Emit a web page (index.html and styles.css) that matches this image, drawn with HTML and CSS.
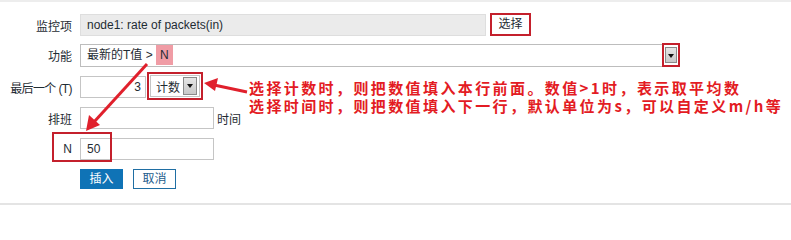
FILE: index.html
```html
<!DOCTYPE html>
<html lang="zh">
<head>
<meta charset="utf-8">
<link rel="stylesheet" href="styles.css">
</head>
<body>
<div class="page">
  <div class="form">
    <div class="row r1">
      <div class="lbl">监控项</div>
      <div class="field">
        <div class="inp grey w-item">node1: rate of packets(in)</div>
        <span class="redbox rb-btn"><span class="btn">选择</span></span>
      </div>
    </div>
    <div class="row r2">
      <div class="lbl">功能</div>
      <div class="field">
        <div class="select w-func">最新的T值 &gt; <span class="hl">N</span></div>
        <span class="redbox rb-arrow"><span class="arrowbtn"></span></span>
      </div>
    </div>
    <div class="row r3">
      <div class="lbl lbl-tight">最后一个 (T)</div>
      <div class="field">
        <div class="inp w-num right">3</div>
        <span class="redbox rb-sel"><span class="minisel"><span class="minisel-text">计数</span><span class="arrowbtn"></span></span></span>
      </div>
    </div>
    <div class="row r4">
      <div class="lbl">排班</div>
      <div class="field">
        <div class="inp w-mid"></div>
        <span class="suffix">时间</span>
      </div>
    </div>
    <div class="row r5">
      <div class="lbl">N</div>
      <div class="field">
        <div class="inp w-mid">50</div>
      </div>
    </div>
    <div class="row r6">
      <div class="lbl"></div>
      <div class="field buttons">
        <span class="btn-primary">插入</span>
        <span class="btn-secondary">取消</span>
      </div>
    </div>
  </div>

  <div class="nbox"></div>

  <svg class="arrows" width="791" height="205" viewBox="0 0 791 205">
    <line x1="247" y1="92" x2="214" y2="85" stroke="#e0202c" stroke-width="3"/>
    <polygon points="204,83 218,78 215,91" fill="#e0202c"/>
    <line x1="147" y1="64" x2="94" y2="122" stroke="#e0202c" stroke-width="3"/>
    <polygon points="86,131 89,115 100,125" fill="#e0202c"/>
  </svg>

  <div class="note">
    <div class="note-line">选择计数时，则把数值填入本行前面。数值&gt;1时，表示取平均数</div>
    <div class="note-line">选择时间时，则把数值填入下一行，默认单位为s，可以自定义m/h等</div>
  </div>
</div>
</body>
</html>
```
FILE: styles.css
```css
* { box-sizing: border-box; }
html, body { margin: 0; padding: 0; background: #fff; }
body {
  font-family: "Liberation Sans", "Noto Sans CJK SC", sans-serif;
  font-size: 12px;
  color: #1f2c33;
}
.page {
  position: relative;
  width: 791px;
  height: 205px;
  border-top: 2px solid #ededed;
  border-bottom: 2px solid #e4e4e4;
  overflow: hidden;
}
.form {
  display: flex;
  flex-direction: column;
}
.row {
  display: flex;
  align-items: center;
  height: 22px;
}
.r1 { margin-top: 12px; }
.r2 { margin-top: 8px; }
.r3 { margin-top: 10px; }
.r4 { margin-top: 9px; }
.r5 { margin-top: 9px; }
.r6 { margin-top: 9px; height: 20px; }

.lbl {
  width: 72px;
  text-align: right;
  white-space: nowrap;
  font-size: 12px;
  color: #1f2c33;
}
.lbl-tight { letter-spacing: -0.6px; }
.field {
  margin-left: 8px;
  display: flex;
  align-items: center;
  height: 100%;
}
.inp {
  height: 22px;
  border: 1px solid #c5c5c5;
  background: #fff;
  padding: 0 6px;
  line-height: 20px;
  font-size: 12px;
  color: #1f2c33;
  white-space: nowrap;
}
.inp.grey { background: #ebebeb; border-color: #dedede; }
.inp.right { text-align: right; padding-right: 4px; }
.w-item { width: 406px; }
.w-num { width: 66px; }
.w-mid { width: 134px; }

.redbox {
  display: inline-flex;
  align-items: center;
  justify-content: center;
  border: 2px solid #c4202c;
  background: #fff;
}
.rb-btn { margin-left: 4px; width: 41px; height: 23px; margin-top: -1px; }
.btn {
  display: inline-block;
  font-size: 12px;
  color: #1f2c33;
  line-height: 17px;
  padding: 0 5px;
}
.select {
  height: 23px;
  border: 1px solid #bdbdbd;
  border-right: none;
  background: #fff;
  padding: 0 6px;
  line-height: 21px;
  font-size: 12px;
  white-space: nowrap;
}
.w-func { width: 582px; }
.hl {
  display: inline-block;
  background: #f09ca5;
  padding: 0 4px;
  height: 20px;
  line-height: 20px;
  vertical-align: top;
}
.rb-arrow { width: 18px; height: 24px; }
.arrowbtn {
  position: relative;
  display: inline-block;
  width: 12px;
  height: 16px;
  background: linear-gradient(#e6e6e6, #c8c8c8);
  border: 1px solid #8a8a8a;
}
.arrowbtn::after {
  content: "";
  position: absolute;
  left: 2px;
  top: 6px;
  border-left: 3px solid transparent;
  border-right: 3px solid transparent;
  border-top: 4px solid #111;
}
.rb-sel { margin-left: 1px; width: 56px; height: 28px; margin-top: -2px; }
.minisel {
  display: inline-flex;
  align-items: center;
  height: 22px;
  width: 50px;
  border: 1px solid #c5c5c5;
  background: #fff;
  padding-left: 5px;
}
.minisel-text { flex: 1; font-size: 12px; color: #1f2c33; }
.minisel .arrowbtn { width: 14px; height: 18px; margin-right: 2px; }
.minisel .arrowbtn::after { left: 3px; top: 6px; }
.suffix { margin-left: 3px; font-size: 12px; color: #1f2c33; }

.buttons { gap: 10px; }
.btn-primary {
  display: inline-block;
  width: 43px;
  height: 20px;
  line-height: 20px;
  text-align: center;
  background: #0f73b6;
  color: #fff;
  font-size: 12px;
}
.btn-secondary {
  display: inline-block;
  width: 43px;
  height: 20px;
  line-height: 18px;
  text-align: center;
  border: 1px solid #1f6ea3;
  background: #fff;
  color: #1d5c8c;
  font-size: 12px;
}

.nbox {
  position: absolute;
  left: 52px;
  top: 130px;
  width: 60px;
  height: 30px;
  border: 2px solid #c4202c;
}
.arrows {
  position: absolute;
  left: 0;
  top: -2px;
}
.note {
  position: absolute;
  left: 249px;
  top: 77px;
  font-family: "Noto Sans CJK SC", sans-serif;
  font-weight: 700;
  font-size: 15px;
  letter-spacing: 2.4px;
  color: #e31b23;
  white-space: nowrap;
}
.note-line {
  height: 18px;
  line-height: 18px;
}
```
